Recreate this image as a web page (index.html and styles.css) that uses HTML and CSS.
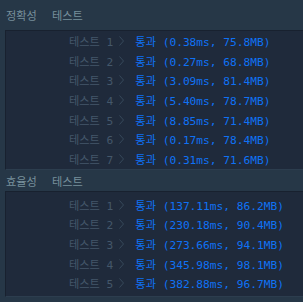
FILE: index.html
```html
<!DOCTYPE html>
<html lang="ko">
<head>
<meta charset="utf-8">
<link rel="stylesheet" href="styles.css">
</head>
<body>
<div class="page">
  <div class="head head-first"><span class="h-title">정확성</span><span class="h-sub">테스트</span></div>
  <div class="box">
    <div class="row"><span class="label">테스트 1</span><svg class="chev" viewBox="0 0 5 10"><path d="M0.5 0.5 L4.5 5 L0.5 9.5" /></svg><span class="res">통과 (0.38ms, 75.8MB)</span></div>
    <div class="row"><span class="label">테스트 2</span><svg class="chev" viewBox="0 0 5 10"><path d="M0.5 0.5 L4.5 5 L0.5 9.5" /></svg><span class="res">통과 (0.27ms, 68.8MB)</span></div>
    <div class="row"><span class="label">테스트 3</span><svg class="chev" viewBox="0 0 5 10"><path d="M0.5 0.5 L4.5 5 L0.5 9.5" /></svg><span class="res">통과 (3.09ms, 81.4MB)</span></div>
    <div class="row"><span class="label">테스트 4</span><svg class="chev" viewBox="0 0 5 10"><path d="M0.5 0.5 L4.5 5 L0.5 9.5" /></svg><span class="res">통과 (5.40ms, 78.7MB)</span></div>
    <div class="row"><span class="label">테스트 5</span><svg class="chev" viewBox="0 0 5 10"><path d="M0.5 0.5 L4.5 5 L0.5 9.5" /></svg><span class="res">통과 (8.85ms, 71.4MB)</span></div>
    <div class="row"><span class="label">테스트 6</span><svg class="chev" viewBox="0 0 5 10"><path d="M0.5 0.5 L4.5 5 L0.5 9.5" /></svg><span class="res">통과 (0.17ms, 78.4MB)</span></div>
    <div class="row"><span class="label">테스트 7</span><svg class="chev" viewBox="0 0 5 10"><path d="M0.5 0.5 L4.5 5 L0.5 9.5" /></svg><span class="res">통과 (0.31ms, 71.6MB)</span></div>
  </div>
  <div class="head head-second"><span class="h-title">효율성</span><span class="h-sub">테스트</span></div>
  <div class="box box-second">
    <div class="row"><span class="label">테스트 1</span><svg class="chev" viewBox="0 0 5 10"><path d="M0.5 0.5 L4.5 5 L0.5 9.5" /></svg><span class="res">통과 (137.11ms, 86.2MB)</span></div>
    <div class="row"><span class="label">테스트 2</span><svg class="chev" viewBox="0 0 5 10"><path d="M0.5 0.5 L4.5 5 L0.5 9.5" /></svg><span class="res">통과 (230.18ms, 90.4MB)</span></div>
    <div class="row"><span class="label">테스트 3</span><svg class="chev" viewBox="0 0 5 10"><path d="M0.5 0.5 L4.5 5 L0.5 9.5" /></svg><span class="res">통과 (273.66ms, 94.1MB)</span></div>
    <div class="row"><span class="label">테스트 4</span><svg class="chev" viewBox="0 0 5 10"><path d="M0.5 0.5 L4.5 5 L0.5 9.5" /></svg><span class="res">통과 (345.98ms, 98.1MB)</span></div>
    <div class="row"><span class="label">테스트 5</span><svg class="chev" viewBox="0 0 5 10"><path d="M0.5 0.5 L4.5 5 L0.5 9.5" /></svg><span class="res">통과 (382.88ms, 96.7MB)</span></div>
  </div>
</div>
</body>
</html>
```

FILE: styles.css
```css
html, body {
  margin: 0;
  padding: 0;
  background: #263747;
}
.page {
  width: 303px;
  height: 302px;
  overflow: hidden;
  background: #263747;
}
.head {
  display: flex;
  align-items: center;
  gap: 15px;
  padding-left: 6px;
  font-family: "Noto Sans CJK KR", "Noto Sans", sans-serif;
  font-size: 11.2px;
  color: #78909c;
}
.head-first {
  height: 30px;
}
.head-second {
  height: 21px;
  padding-top: 1px;
  box-sizing: border-box;
}
.box {
  margin-left: 5px;
  width: 320px;
  background: #1f2a3b;
  border-top: 1px solid #18212f;
  border-left: 1px solid #18212f;
  border-bottom: 1px solid #2c3d4e;
}
.box-second {
  padding-top: 3px;
  padding-bottom: 3px;
}
.row {
  height: 19.7px;
  display: flex;
  align-items: center;
  font-family: "DejaVu Sans Mono", "Noto Sans CJK KR", monospace;
  font-size: 11.2px;
  white-space: pre;
}
.label {
  margin-left: 63px;
  color: #44576a;
}
.chev {
  width: 5px;
  height: 10px;
  margin-left: 6px;
  margin-right: 11px;
  fill: none;
  stroke: #37485a;
  stroke-width: 1;
}
.res {
  color: #0f72f5;
}
```
